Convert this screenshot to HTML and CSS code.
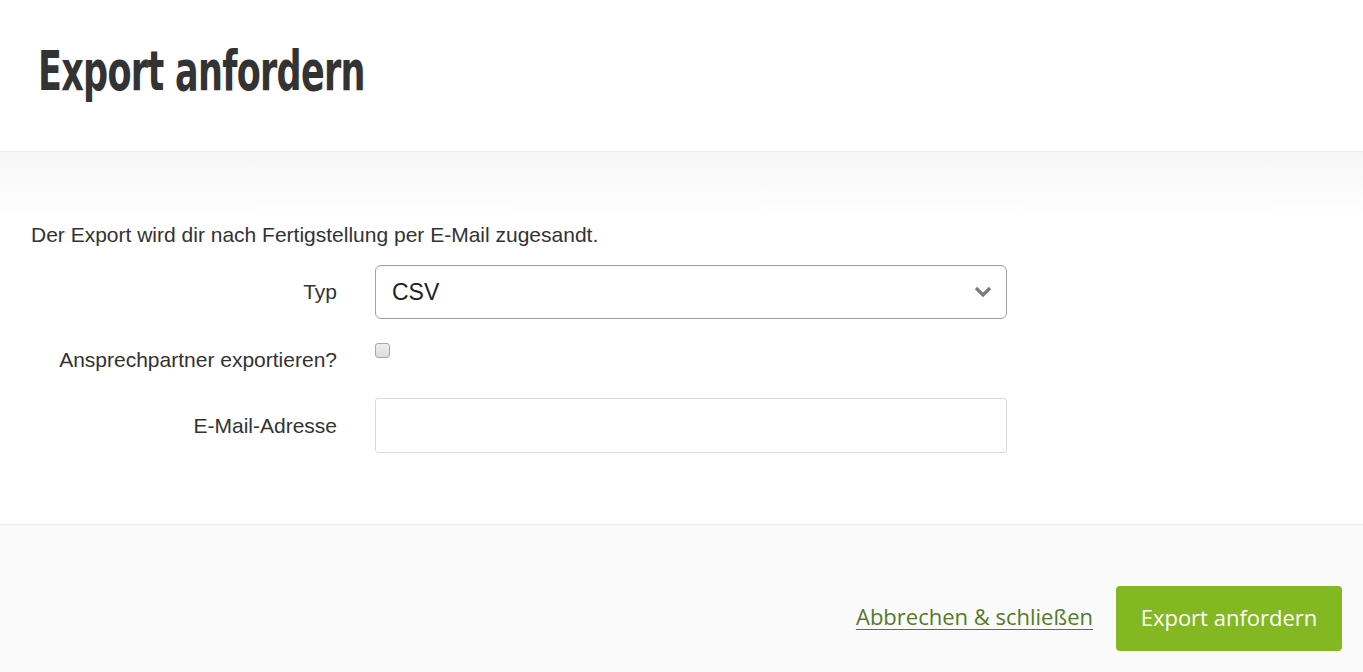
FILE: index.html
```html
<!DOCTYPE html>
<html lang="de">
<head>
<meta charset="utf-8">
<title>Export anfordern</title>
<link rel="stylesheet" href="styles.css">
</head>
<body>
<div class="modal">
  <header class="modal-header">
    <h1 class="title">Export anfordern</h1>
  </header>
  <section class="modal-body">
    <p class="intro">Der Export wird dir nach Fertigstellung per E-Mail zugesandt.</p>
    <form class="form">
      <label class="label label-typ" for="typ">Typ</label>
      <div class="select">
        <span class="select-value">CSV</span>
        <svg class="chevron" width="18" height="12" viewBox="0 0 18 12"><path d="M2 2 L9 9 L16 2" fill="none" stroke="#7a7a7a" stroke-width="3.2"/></svg>
      </div>
      <label class="label label-check" for="ap">Ansprechpartner exportieren?</label>
      <div class="check-cell"><span class="checkbox" id="ap"></span></div>
      <label class="label label-mail" for="mail">E-Mail-Adresse</label>
      <div class="input" id="mail"></div>
    </form>
  </section>
  <footer class="modal-footer">
    <a class="cancel" href="#">Abbrechen &amp; schließen</a>
    <button class="submit" type="button">Export anfordern</button>
  </footer>
</div>
</body>
</html>
```
FILE: styles.css
```css
html, body {
  margin: 0;
  padding: 0;
  background: #ffffff;
}
body {
  font-family: "Liberation Sans", Arial, sans-serif;
  color: #333333;
}
.modal {
  width: 1363px;
  height: 672px;
  display: flex;
  flex-direction: column;
}
.modal-header {
  height: 151px;
  border-bottom: 1px solid #ebebeb;
  box-sizing: content-box;
  padding-left: 38px;
  display: flex;
  align-items: flex-start;
}
.title {
  margin: 38px 0 0 0;
  font-family: "DejaVu Sans Condensed", "DejaVu Sans", sans-serif;
  font-weight: 700;
  font-size: 56px;
  line-height: 66px;
  letter-spacing: -1px;
  color: #333333;
  transform: scaleX(0.695);
  transform-origin: left center;
  white-space: nowrap;
}
.modal-body {
  height: 372px;
  border-bottom: 1px solid #ebebeb;
  background: linear-gradient(to bottom, #f6f6f6 0px, #ffffff 65px);
  padding: 0 31px;
}
.intro {
  margin: 71px 0 0 0;
  font-size: 21px;
  line-height: 24px;
  color: #333333;
}
.form {
  margin-top: 18px;
  display: grid;
  grid-template-columns: 306px 632px;
  grid-template-rows: 54px 47px 55px;
  column-gap: 38px;
  row-gap: 16px;
}
.label {
  justify-self: end;
  font-size: 21px;
  line-height: 24px;
  color: #333333;
}
.label-typ {
  align-self: center;
}
.label-check {
  align-self: start;
  padding-top: 13px;
}
.label-mail {
  align-self: center;
}
.select {
  box-sizing: border-box;
  height: 54px;
  border: 1px solid #a0a0a0;
  border-radius: 6px;
  background: #ffffff;
  display: flex;
  align-items: center;
  justify-content: space-between;
  padding: 0 14px 0 16px;
  box-shadow: inset 0 1px 1px rgba(0,0,0,0.04);
}
.select-value {
  font-size: 23px;
  color: #222222;
}
.chevron {
  display: block;
}
.check-cell {
  padding-top: 8px;
}
.checkbox {
  display: block;
  box-sizing: border-box;
  width: 15px;
  height: 15px;
  border: 1px solid #a8a8a8;
  border-radius: 3px;
  background: linear-gradient(to bottom, #eeeeee, #dcdcdc);
}
.input {
  box-sizing: border-box;
  height: 55px;
  border: 1px solid #dadada;
  border-radius: 3px;
  background: #ffffff;
}
.modal-footer {
  flex: 1;
  background: #fafafa;
  display: flex;
  justify-content: flex-end;
  align-items: flex-start;
  padding: 61px 21px 0 0;
  gap: 23px;
}
.cancel {
  font-family: "Open Sans", sans-serif;
  font-size: 22px;
  line-height: 60px;
  color: #56792a;
  text-decoration: underline;
  text-underline-offset: 4px;
  text-decoration-thickness: 1px;
}
.submit {
  width: 226px;
  height: 65px;
  border: 0;
  border-radius: 4px;
  background: #84b823;
  color: #ffffff;
  font-family: "Open Sans", sans-serif;
  font-size: 22px;
  padding: 0 0 3px 0;
  cursor: pointer;
}
```
